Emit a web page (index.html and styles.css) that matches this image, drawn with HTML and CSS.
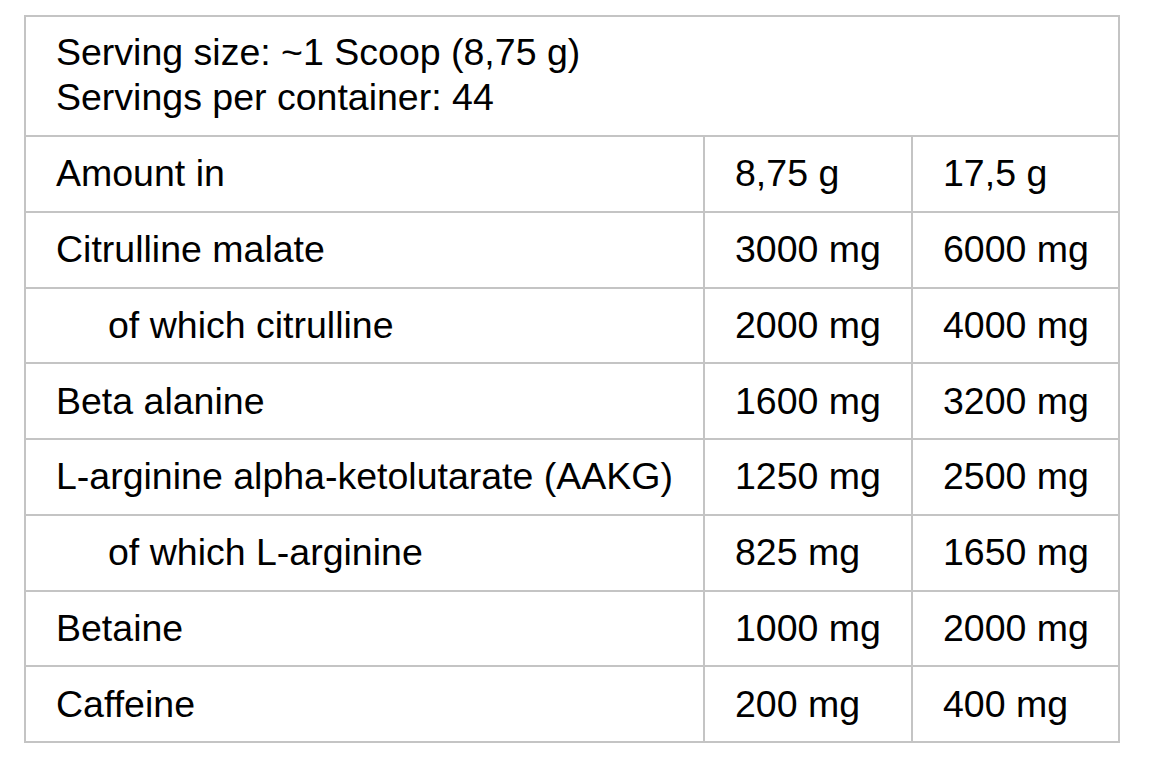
FILE: index.html
```html
<!DOCTYPE html>
<html>
<head>
<meta charset="utf-8">
<link rel="stylesheet" href="styles.css">
</head>
<body>
<div class="facts">
  <div class="cell head">Serving size: ~1 Scoop (8,75 g)<br>Servings per container: 44</div>
  <div class="cell">Amount in</div><div class="cell">8,75 g</div><div class="cell">17,5 g</div>
  <div class="cell">Citrulline malate</div><div class="cell">3000 mg</div><div class="cell">6000 mg</div>
  <div class="cell sub">of which citrulline</div><div class="cell">2000 mg</div><div class="cell">4000 mg</div>
  <div class="cell">Beta alanine</div><div class="cell">1600 mg</div><div class="cell">3200 mg</div>
  <div class="cell">L-arginine alpha-ketolutarate (AAKG)</div><div class="cell">1250 mg</div><div class="cell">2500 mg</div>
  <div class="cell sub">of which L-arginine</div><div class="cell">825 mg</div><div class="cell">1650 mg</div>
  <div class="cell">Betaine</div><div class="cell">1000 mg</div><div class="cell">2000 mg</div>
  <div class="cell">Caffeine</div><div class="cell">200 mg</div><div class="cell">400 mg</div>
</div>
</body>
</html>
```
FILE: styles.css
```css
html, body {
  margin: 0;
  padding: 0;
  background: #fff;
}
body {
  padding: 15px 0 0 24px;
  font-family: Arial, "Liberation Sans", sans-serif;
  color: #000;
}
.facts {
  display: grid;
  width: 1092px;
  grid-template-columns: 677px 206px 205px;
  grid-template-rows: 118px repeat(8, 73.75px);
  gap: 2px;
  padding: 2px;
  background: #c4c4c4;
}
.cell {
  background: #fff;
  display: flex;
  align-items: center;
  padding-left: 30px;
  font-size: 37.5px;
  line-height: 45px;
  white-space: nowrap;
}
.head {
  grid-column: 1 / 4;
  display: block;
  padding-top: 13px;
}
.sub {
  padding-left: 82px;
}
```
